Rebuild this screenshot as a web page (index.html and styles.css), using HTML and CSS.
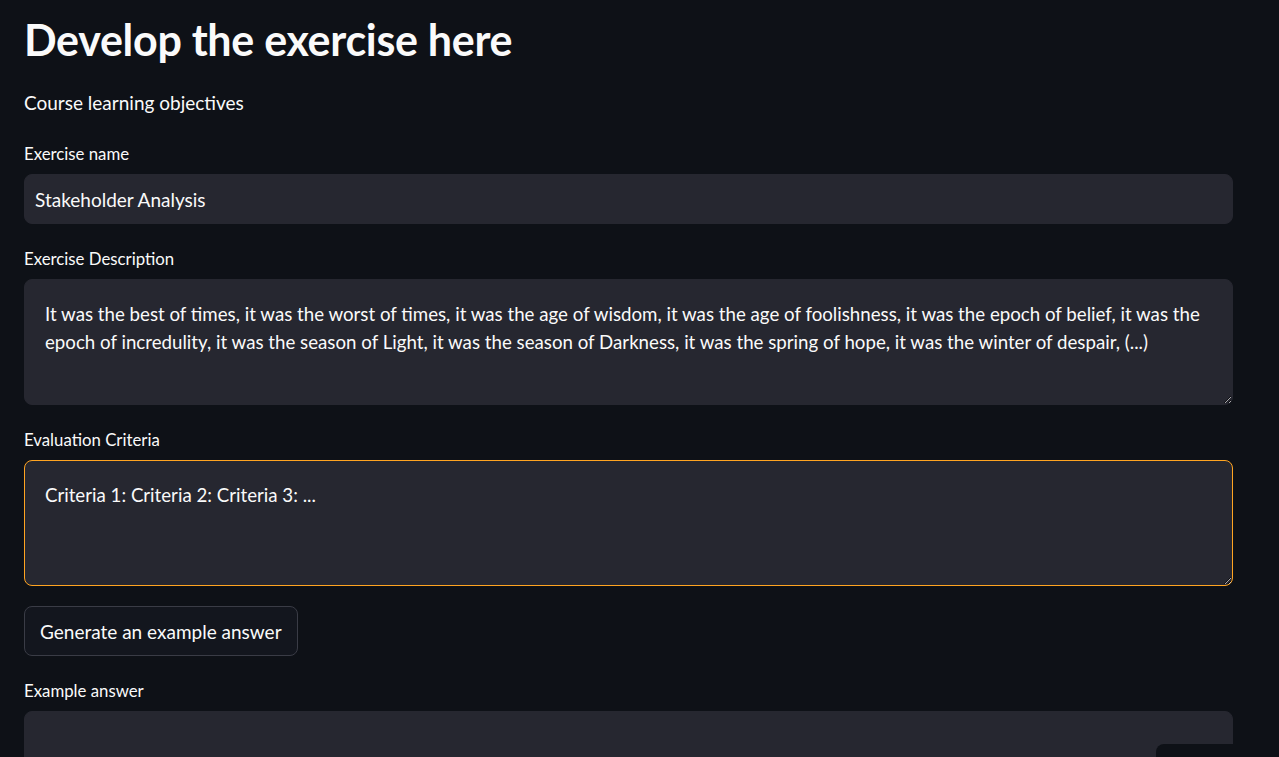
FILE: index.html
```html
<!DOCTYPE html>
<html lang="en">
<head>
<meta charset="utf-8">
<title>Develop the exercise here</title>
<link rel="stylesheet" href="styles.css">
</head>
<body>
<main class="page">
  <h1 class="title">Develop the exercise here</h1>
  <p class="subtitle">Course learning objectives</p>

  <div class="field field-first">
    <label class="label" for="name">Exercise name</label>
    <input class="input" id="name" type="text" value="Stakeholder Analysis">
  </div>

  <div class="field">
    <label class="label" for="desc">Exercise Description</label>
    <textarea class="area" id="desc">It was the best of times, it was the worst of times, it was the age of wisdom, it was the age of foolishness, it was the epoch of belief, it was the epoch of incredulity, it was the season of Light, it was the season of Darkness, it was the spring of hope, it was the winter of despair, (...)</textarea>
  </div>

  <div class="field">
    <label class="label" for="crit">Evaluation Criteria</label>
    <textarea class="area area-focus" id="crit">Criteria 1: Criteria 2: Criteria 3: ...</textarea>
  </div>

  <div class="actions">
    <button class="btn" type="button">Generate an example answer</button>
  </div>

  <div class="field">
    <label class="label" for="ans">Example answer</label>
    <textarea class="area area-last" id="ans"></textarea>
  </div>
</main>
<div class="corner-widget"></div>
</body>
</html>
```

FILE: styles.css
```css
html, body {
  margin: 0;
  padding: 0;
  background: #0e1117;
  color: #fafafa;
  font-family: Lato, "Noto Sans", sans-serif;
  color-scheme: dark;
  overflow: hidden;
  height: 757px;
}

.page {
  width: 1209px;
  height: 745px;
  overflow: hidden;
  padding: 12px 0 0 24px;
  display: flex;
  flex-direction: column;
}

.title {
  margin: 0;
  font-size: 43px;
  line-height: 56px;
  font-weight: 700;
  letter-spacing: -0.3px;
}

.subtitle {
  margin: 22px 0 0 0;
  font-size: 19px;
  line-height: 26px;
}

.field {
  display: flex;
  flex-direction: column;
  flex-shrink: 0;
}

.label {
  font-size: 16.8px;
  line-height: 22px;
  margin-top: 24px;
  margin-bottom: 9px;
}

.field-first .label {
  margin-top: 27px;
}

.input {
  box-sizing: border-box;
  height: 50px;
  border: 1px solid #262730;
  border-radius: 8px;
  background: #262730;
  color: #fafafa;
  font-family: inherit;
  font-size: 19px;
  padding: 0 10px;
  outline: none;
}

.area {
  box-sizing: border-box;
  height: 126px;
  flex-shrink: 0;
  border: 1px solid #262730;
  border-radius: 8px;
  background: #262730;
  color: #fafafa;
  font-family: inherit;
  font-size: 18.7px;
  line-height: 28px;
  padding: 20px 12px 20px 20px;
  resize: vertical;
  outline: none;
  overflow: hidden;
}

.area-focus {
  border-color: #ffa421;
}

.actions {
  margin-top: 20px;
  display: flex;
  flex-shrink: 0;
}

.btn {
  height: 50px;
  padding: 0 15px;
  border: 1px solid #3a3c46;
  border-radius: 8px;
  background: #13161e;
  color: #fafafa;
  font-family: inherit;
  font-size: 19px;
}

.corner-widget {
  position: absolute;
  left: 1156px;
  top: 744px;
  width: 123px;
  height: 13px;
  background: #0e1117;
  border-top-left-radius: 8px;
}
```
